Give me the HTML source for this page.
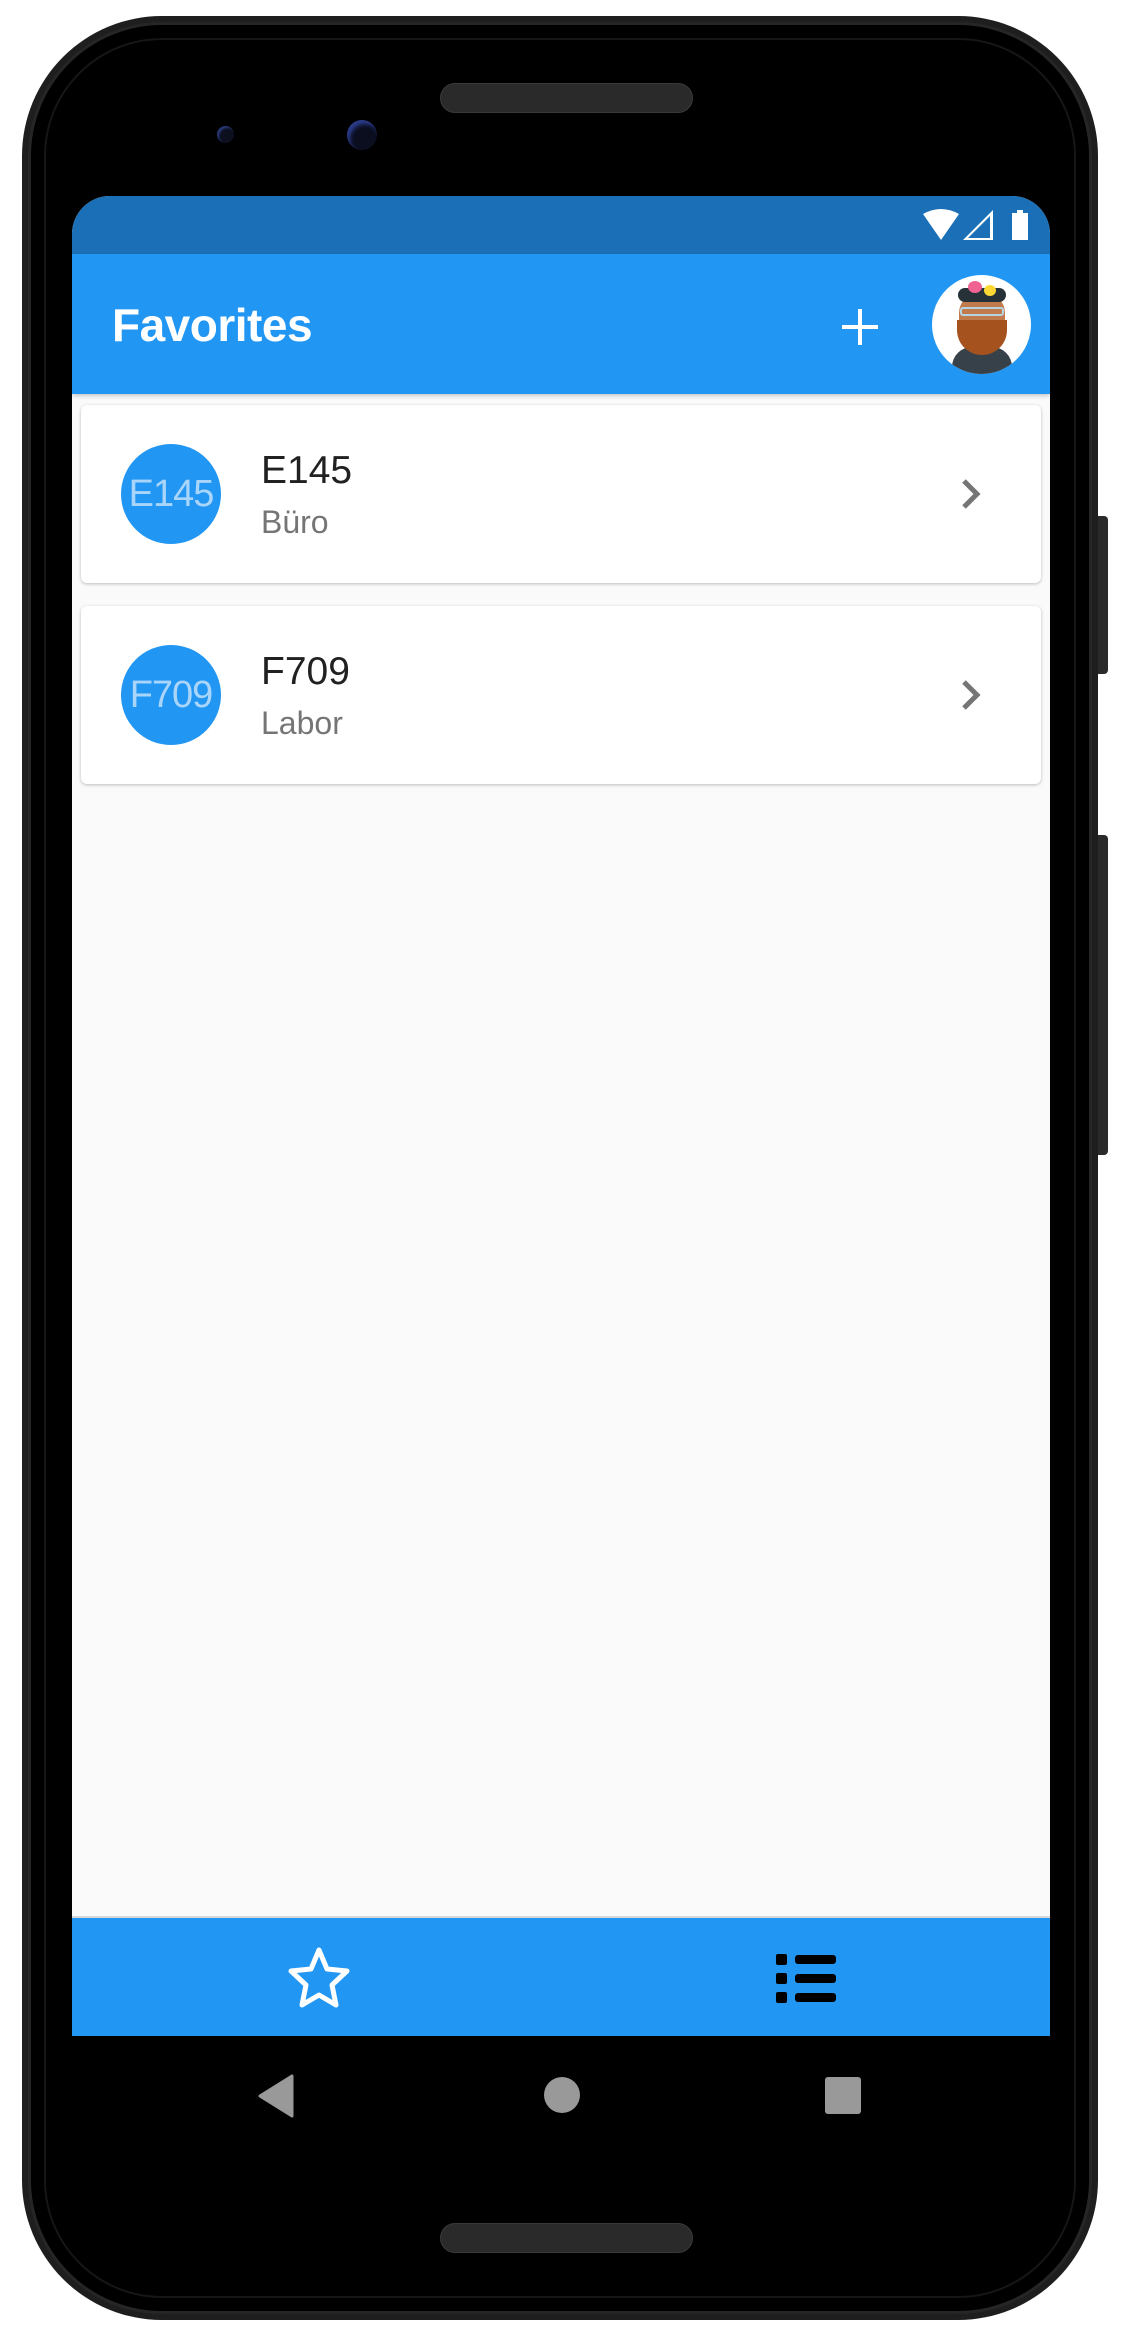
<!DOCTYPE html>
<html><head><meta charset="utf-8"><style>
*{margin:0;padding:0;box-sizing:border-box}
body{width:1125px;height:2337px;background:#fff;position:relative;overflow:hidden;font-family:"Liberation Sans",Roboto,sans-serif}
.abs{position:absolute}
.phone{left:22px;top:16px;width:1076px;height:2304px;border-radius:140px;background:#1e1e1e}
.phone2{left:28px;top:22px;width:1064px;height:2292px;border-radius:134px;background:#000;border:3px solid #262626}
.phone3{left:44px;top:38px;width:1032px;height:2260px;border-radius:118px;border:2px solid #161616}
.spk{width:253px;height:30px;border-radius:15px;background:#2a2a2a;border:1px solid #3a3a3a}
.screen{left:72px;top:196px;width:978px;height:1840px;background:#fafafa;border-radius:38px 38px 0 0;overflow:hidden}
.card{left:9px;width:960px;height:178px;background:#fff;border-radius:6px;box-shadow:0 1px 3px rgba(0,0,0,.25)}
.circ{left:40px;top:39px;width:100px;height:100px;border-radius:50%;background:#2196f3;color:#a9d5fa;font-size:38px;text-align:center;line-height:100px;letter-spacing:-1px}
.t1{left:180px;top:44px;font-size:39px;color:#212121}
.t2{left:180px;top:99px;font-size:32px;color:#757575}
</style></head><body>
<div class="abs" style="left:1096px;top:516px;width:12px;height:158px;background:#2a2a2a;border-radius:0 4px 4px 0"></div>
<div class="abs" style="left:1096px;top:835px;width:12px;height:320px;background:#2a2a2a;border-radius:0 4px 4px 0"></div>
<div class="abs phone"></div>
<div class="abs phone2"></div>
<div class="abs phone3"></div>
<div class="abs spk" style="left:440px;top:83px"></div>
<div class="abs spk" style="left:440px;top:2223px"></div>
<div class="abs" style="left:217px;top:126px;width:17px;height:17px;border-radius:50%;background:#0c0f1e;box-shadow:inset 2px 2px 2px #2a3a7a"></div>
<div class="abs" style="left:347px;top:120px;width:30px;height:30px;border-radius:50%;background:#0b0e1f;box-shadow:inset 3px 4px 4px #2c3c8c"></div>
<div class="abs screen">
 <div class="abs" style="left:0;top:0;width:978px;height:58px;background:#1b6fb6"></div>
 <svg class="abs" style="left:851px;top:13px" width="110" height="32" viewBox="0 0 110 32">
  <path d="M0 5 Q18 -5 36 5 L18 31 Z" fill="#fff"/>
  <path d="M40 31 L70 1 L70 31 Z M45 29 L67 29 L67 7 Z" fill="#fff" fill-rule="evenodd"/>
  <path d="M89 4 h5 v-3 h6 v3 h5 v27 h-16z" fill="#fff"/>
 </svg>
 <div class="abs" style="left:0;top:58px;width:978px;height:140px;background:#2196f3;box-shadow:0 2px 4px rgba(0,0,0,.2)"></div>
 <div class="abs" style="left:40px;top:102px;font-size:46px;font-weight:bold;color:#fff;letter-spacing:-0.5px">Favorites</div>
 <div class="abs" style="left:770px;top:129px;width:36px;height:4px;background:#fff"></div>
 <div class="abs" style="left:786px;top:113px;width:4px;height:36px;background:#fff"></div>
 <div class="abs" style="left:860px;top:79px;width:99px;height:99px;border-radius:50%;background:#fff;overflow:hidden">
  <div class="abs" style="left:20px;top:72px;width:60px;height:40px;border-radius:20px 20px 0 0;background:#37414a"></div>
  <div class="abs" style="left:27px;top:18px;width:46px;height:60px;border-radius:20px;background:#c07a4b"></div>
  <div class="abs" style="left:25px;top:45px;width:50px;height:35px;border-radius:0 0 25px 25px;background:#a5521f"></div>
  <div class="abs" style="left:26px;top:13px;width:48px;height:14px;border-radius:10px;background:#263238"></div>
  <div class="abs" style="left:36px;top:6px;width:14px;height:12px;border-radius:50%;background:#f06292"></div>
  <div class="abs" style="left:52px;top:10px;width:12px;height:11px;border-radius:50%;background:#fdd835"></div>
  <div class="abs" style="left:28px;top:32px;width:44px;height:9px;border:2px solid #b3d4e0;border-radius:3px"></div>
 </div>
 <div class="abs card" style="top:209px">
  <div class="abs circ">E145</div>
  <div class="abs t1">E145</div>
  <div class="abs t2">Büro</div>
  <svg class="abs" style="left:878px;top:72px" width="24" height="34" viewBox="0 0 24 34"><path d="M5 4 L18 17 L5 30" stroke="#757575" stroke-width="5" fill="none"/></svg>
 </div>
 <div class="abs card" style="top:410px">
  <div class="abs circ">F709</div>
  <div class="abs t1">F709</div>
  <div class="abs t2">Labor</div>
  <svg class="abs" style="left:878px;top:72px" width="24" height="34" viewBox="0 0 24 34"><path d="M5 4 L18 17 L5 30" stroke="#757575" stroke-width="5" fill="none"/></svg>
 </div>
 <div class="abs" style="left:0;top:1720px;width:978px;height:120px;background:#2196f3;border-top:2px solid #d8d8d8"></div>
 <svg class="abs" style="left:214px;top:1750px" width="66" height="64" viewBox="0 0 66 64">
  <path d="M33 4 L41 23 L61 25 L46 39 L50 59 L33 49 L16 59 L20 39 L5 25 L25 23 Z" stroke="#fff" stroke-width="5" stroke-linejoin="round" fill="none"/>
 </svg>
 <svg class="abs" style="left:704px;top:1758px" width="62" height="50" viewBox="0 0 62 50">
  <rect x="0" y="0" width="11" height="11" rx="2"/><rect x="19" y="1" width="41" height="9" rx="3"/>
  <rect x="0" y="19" width="11" height="11" rx="2"/><rect x="19" y="20" width="41" height="9" rx="3"/>
  <rect x="0" y="38" width="11" height="11" rx="2"/><rect x="19" y="39" width="41" height="9" rx="3"/>
 </svg>
</div>
<svg class="abs" style="left:256px;top:2074px" width="40" height="44" viewBox="0 0 40 44"><path d="M36 2 L36 42 L4 22 Z" fill="#999" stroke="#999" stroke-width="3" stroke-linejoin="round"/></svg>
<div class="abs" style="left:544px;top:2077px;width:36px;height:36px;border-radius:50%;background:#999"></div>
<div class="abs" style="left:825px;top:2077px;width:36px;height:37px;border-radius:3px;background:#999"></div>
</body></html>
